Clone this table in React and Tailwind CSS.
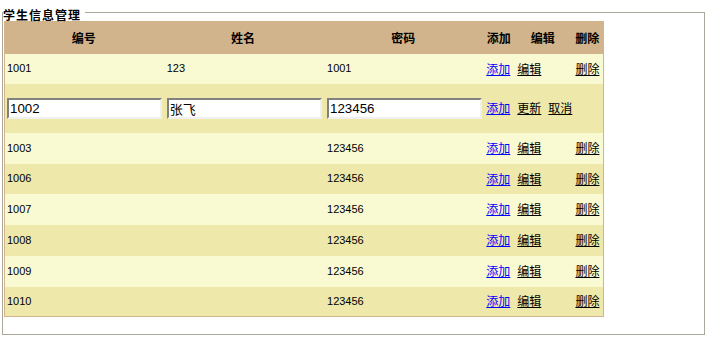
import React from "react";

// Rows of the student table (row 1002 is in edit mode)
const rows = [
  { id: "1001", name: "123", pwd: "1001" },
  { id: "1002", name: "张飞", pwd: "123456", editing: true },
  { id: "1003", name: "", pwd: "123456" },
  { id: "1006", name: "", pwd: "123456" },
  { id: "1007", name: "", pwd: "123456" },
  { id: "1008", name: "", pwd: "123456" },
  { id: "1009", name: "", pwd: "123456" },
  { id: "1010", name: "", pwd: "123456" },
];

const heights = ["h-[30px]", "h-[49px]", "h-[31px]", "h-[30px]", "h-[31px]", "h-[31px]", "h-[31px]", "h-[30px]"];

const cjk = "font-['SimSun','Noto_Sans_CJK_SC',sans-serif]";
const num = "font-['Liberation_Sans','Noto_Sans_CJK_SC',sans-serif] text-[11px]";

function Field({ value, cjkText }) {
  return (
    <input
      readOnly
      value={value}
      className={`w-[155px] h-[21px] bg-white border-2 border-t-[#808080] border-l-[#808080] border-b-[#f0f0f0] border-r-[#f0f0f0] pl-[1px] text-black outline-none ${
        cjkText ? "font-['Noto_Sans_CJK_SC',sans-serif] text-[13px]" : "font-['Liberation_Sans',sans-serif] text-[13.33px]"
      }`}
    />
  );
}

export default function App() {
  return (
    <div className="w-[718px] h-[345px] bg-white pt-[12px] pl-[2px] text-black">
      <div className="w-[703px] h-[323px] border border-[#aca899]">
        <div className={`-mt-[6px] w-[82px] h-[14px] pt-[2px] bg-white pr-[3px] leading-[12px] text-[12px] font-bold tracking-[1px] ${cjk}`}>
          学生信息管理
        </div>
        <table className="ml-[1px] w-[600px] border border-[#d2b48c] border-collapse table-fixed bg-[#fafad2] text-[12px]">
          <colgroup>
            <col className="w-[158px]" />
            <col className="w-[160px]" />
            <col className="w-[160px]" />
            <col className="w-[31px]" />
            <col className="w-[57px]" />
            <col className="w-[32px]" />
          </colgroup>
          <thead>
            <tr className={`h-[32px] bg-[#d2b48c] font-bold ${cjk}`}>
              <th className="text-center p-0">编号</th>
              <th className="text-center p-0">姓名</th>
              <th className="text-center p-0">密码</th>
              <th className="text-center p-0">添加</th>
              <th className="text-center p-0">编辑</th>
              <th className="text-center p-0">删除</th>
            </tr>
          </thead>
          <tbody>
            {rows.map((r, i) => (
              <tr key={r.id} className={`${heights[i]} ${i % 2 === 1 ? "bg-[#eee8aa]" : "bg-[#fafad2]"}`}>
                {r.editing ? (
                  <>
                    <td className="pl-[2px] py-0"><Field value={r.id} /></td>
                    <td className="pl-[4px] py-0"><Field value={r.name} cjkText /></td>
                    <td className="pl-[4px] py-0"><Field value={r.pwd} /></td>
                    <td className={`pl-[3px] py-0 ${cjk}`}>
                      <a href="#" className="text-[#0000ff] underline">添加</a>
                    </td>
                    <td colSpan={2} className={`pl-[3px] py-0 ${cjk}`}>
                      <a href="#" className="underline">更新</a>
                      <a href="#" className="underline ml-[7px]">取消</a>
                    </td>
                  </>
                ) : (
                  <>
                    <td className={`pl-[2px] py-0 ${num}`}>{r.id}</td>
                    <td className={`pl-[4px] py-0 ${num}`}>{r.name}</td>
                    <td className={`pl-[4px] py-0 ${num}`}>{r.pwd}</td>
                    <td className={`pl-[3px] py-0 ${cjk}`}>
                      <a href="#" className="text-[#0000ff] underline">添加</a>
                    </td>
                    <td className={`pl-[3px] py-0 ${cjk}`}>
                      <a href="#" className="underline">编辑</a>
                    </td>
                    <td className={`pl-[4px] py-0 ${cjk}`}>
                      <a href="#" className="underline">删除</a>
                    </td>
                  </>
                )}
              </tr>
            ))}
          </tbody>
        </table>
      </div>
    </div>
  );
}
